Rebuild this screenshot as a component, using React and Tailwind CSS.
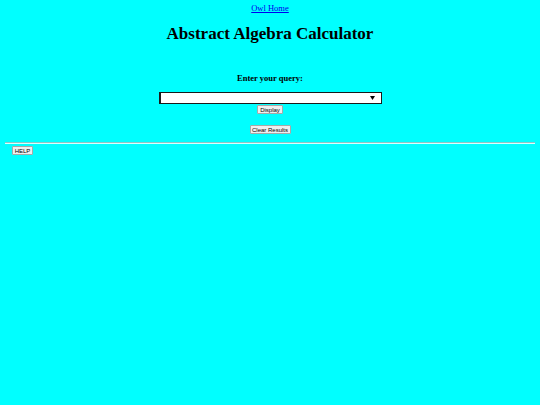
import React from "react";

function Btn({ children, className = "" }) {
  return (
    <button
      type="button"
      className={
        "h-[9px] px-[2px] bg-[#efefef] border border-[#a8a8a8] rounded-[1px] text-[6px] leading-[6px] whitespace-nowrap text-black font-['Liberation_Sans',Arial,sans-serif] flex items-center justify-center " +
        className
      }
    >
      {children}
    </button>
  );
}

export default function App() {
  return (
    <div className="min-h-[405px] w-full bg-[#00ffff] font-['Liberation_Serif','Times_New_Roman',serif] text-black flex flex-col">
      <div className="pt-[3px] text-center text-[8.5px] leading-[10px]">
        <a href="#" className="text-[#0000ee] underline">Owl Home</a>
      </div>
      <h1 className="mt-[11px] text-center text-[17px] leading-[20px] font-bold">
        Abstract Algebra Calculator
      </h1>
      <div className="mt-[29px] text-center text-[8.5px] leading-[10px] font-bold">
        Enter your query:
      </div>
      <div className="mt-[9px] flex justify-center">
        <div className="w-[223px] h-[12px] bg-white border border-[#1a1a1a] border-l-2 flex items-center justify-end pr-[6px]">
          <svg width="5" height="4" viewBox="0 0 5 4">
            <polygon points="0,0 5,0 2.5,4" fill="#000" />
          </svg>
        </div>
      </div>
      <div className="mt-[1px] flex justify-center">
        <Btn className="w-[26px]">Display</Btn>
      </div>
      <div className="mt-[11px] flex justify-center">
        <Btn className="w-[41px]">Clear Results</Btn>
      </div>
      <div className="mt-[8px] mx-[5px] border-t border-t-[#8fc4c4] border-b border-b-[#d8ffff]" />
      <div className="mt-[2px] ml-[12px] flex">
        <Btn className="w-[21px]">HELP</Btn>
      </div>
    </div>
  );
}
